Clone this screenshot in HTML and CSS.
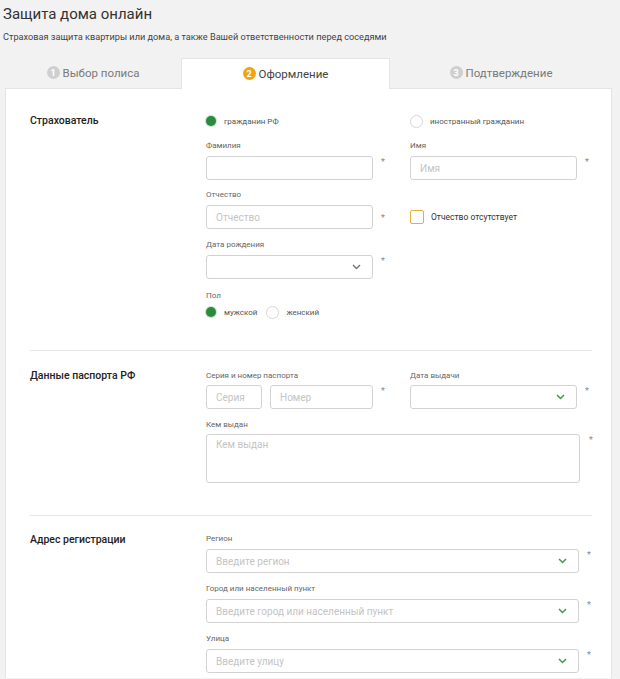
FILE: index.html
```html
<!DOCTYPE html>
<html lang="ru">
<head>
<meta charset="utf-8">
<title>Защита дома онлайн</title>
<link rel="stylesheet" href="styles.css">
</head>
<body>
<div class="head">
  <h1 class="title">Защита дома онлайн</h1>
  <p class="subtitle">Страховая защита квартиры или дома, а также Вашей ответственности перед соседями</p>
</div>
<div class="tabs">
  <div class="tab t1"><span class="num">1</span>Выбор полиса</div>
  <div class="tab t2 active"><span class="num">2</span>Оформление</div>
  <div class="tab t3"><span class="num">3</span>Подтверждение</div>
</div>
<div class="panel">
  <section class="section s1">
    <h2 class="sec-title">Страхователь</h2>
    <div class="fields">
      <div class="row">
        <div class="col"><label class="radio"><span class="dot on"></span>гражданин РФ</label></div>
        <div class="col"><label class="radio"><span class="dot big"></span>иностранный гражданин</label></div>
      </div>
      <div class="row r-fio">
        <div class="col">
          <div class="lbl">Фамилия</div>
          <div class="ctl"><div class="input w167"></div><span class="req">*</span></div>
        </div>
        <div class="col">
          <div class="lbl">Имя</div>
          <div class="ctl"><div class="input w167"><span class="ph">Имя</span></div><span class="req">*</span></div>
        </div>
      </div>
      <div class="row r-mid">
        <div class="col">
          <div class="lbl">Отчество</div>
          <div class="ctl"><div class="input w167"><span class="ph">Отчество</span></div><span class="req">*</span></div>
        </div>
        <div class="col">
          <div class="lbl">&nbsp;</div>
          <div class="ctl"><label class="check"><span class="box"></span>Отчество отсутствует</label></div>
        </div>
      </div>
      <div class="row r-birth">
        <div class="col">
          <div class="lbl">Дата рождения</div>
          <div class="ctl"><div class="input select w167"><svg class="chev" width="9" height="6" viewBox="0 0 9 6"><polyline points="1,1 4.5,4.5 8,1" fill="none" stroke="#777" stroke-width="1.4"/></svg></div><span class="req">*</span></div>
        </div>
      </div>
      <div class="row r-sex">
        <div class="col wide">
          <div class="lbl">Пол</div>
          <div class="radios">
            <label class="radio"><span class="dot on"></span>мужской</label>
            <label class="radio"><span class="dot big"></span>женский</label>
          </div>
        </div>
      </div>
    </div>
  </section>

  <section class="section s2">
    <h2 class="sec-title">Данные паспорта РФ</h2>
    <div class="fields">
      <div class="row">
        <div class="col">
          <div class="lbl">Серия и номер паспорта</div>
          <div class="ctl">
            <div class="input w56"><span class="ph">Серия</span></div>
            <div class="input w103 gapl"><span class="ph">Номер</span></div>
            <span class="req">*</span>
          </div>
        </div>
        <div class="col">
          <div class="lbl">Дата выдачи</div>
          <div class="ctl"><div class="input select w167"><svg class="chev" width="9" height="6" viewBox="0 0 9 6"><polyline points="1,1 4.5,4.5 8,1" fill="none" stroke="#3f9a4c" stroke-width="1.5"/></svg></div><span class="req">*</span></div>
        </div>
      </div>
      <div class="row r-who">
        <div class="col wide">
          <div class="lbl">Кем выдан</div>
          <div class="ctl"><div class="input textarea w374"><span class="ph">Кем выдан</span></div><span class="req">*</span></div>
        </div>
      </div>
    </div>
  </section>

  <section class="section s3">
    <h2 class="sec-title">Адрес регистрации</h2>
    <div class="fields">
      <div class="row">
        <div class="col wide">
          <div class="lbl">Регион</div>
          <div class="ctl"><div class="input select w373"><span class="ph">Введите регион</span><svg class="chev" width="9" height="6" viewBox="0 0 9 6"><polyline points="1,1 4.5,4.5 8,1" fill="none" stroke="#3f9a4c" stroke-width="1.5"/></svg></div><span class="req">*</span></div>
        </div>
      </div>
      <div class="row r-addr">
        <div class="col wide">
          <div class="lbl">Город или населенный пункт</div>
          <div class="ctl"><div class="input select w373"><span class="ph">Введите город или населенный пункт</span><svg class="chev" width="9" height="6" viewBox="0 0 9 6"><polyline points="1,1 4.5,4.5 8,1" fill="none" stroke="#3f9a4c" stroke-width="1.5"/></svg></div><span class="req">*</span></div>
        </div>
      </div>
      <div class="row r-addr">
        <div class="col wide">
          <div class="lbl">Улица</div>
          <div class="ctl"><div class="input select w373"><span class="ph">Введите улицу</span><svg class="chev" width="9" height="6" viewBox="0 0 9 6"><polyline points="1,1 4.5,4.5 8,1" fill="none" stroke="#3f9a4c" stroke-width="1.5"/></svg></div><span class="req">*</span></div>
        </div>
      </div>
    </div>
  </section>
</div>
</body>
</html>
```

FILE: styles.css
```css
html, body {
  margin: 0;
  padding: 0;
  background: #f2f2f2;
  font-family: Roboto, "Open Sans", "Liberation Sans", sans-serif;
  color: #333;
  overflow: hidden;
}

.head {
  padding: 4px 0 0 3px;
}

.title {
  margin: 0;
  font-size: 15px;
  line-height: 20px;
  font-weight: 400;
  color: #333;
}

.subtitle {
  margin: 7px 0 0;
  font-size: 9.2px;
  line-height: 12px;
  color: #444;
}

.tabs {
  display: flex;
  margin: 15px 0 0 5px;
  width: 607px;
  height: 30px;
}

.tab {
  display: flex;
  align-items: center;
  justify-content: center;
  height: 30px;
  padding-bottom: 1px;
  box-sizing: border-box;
  font-size: 11.5px;
  color: #7a7a7a;
}

.t1 { width: 176px; }
.t2 { width: 209px; }
.t3 { flex: 1; }

.tab.active {
  position: relative;
  z-index: 1;
  height: 31px;
  background: #fff;
  border: 1px solid #e4e4e4;
  border-bottom: none;
  color: #444;
}

.num {
  display: inline-flex;
  align-items: center;
  justify-content: center;
  width: 13px;
  height: 13px;
  border-radius: 50%;
  background: #cfcfcf;
  color: #fff;
  font-size: 9px;
  font-weight: 700;
  margin-right: 3px;
}

.active .num {
  background: #f0a415;
}

.panel {
  margin-left: 5px;
  width: 607px;
  box-sizing: border-box;
  background: #fff;
  border: 1px solid #e4e4e4;
  border-bottom: none;
  padding: 0 19px 0 24px;
}

.section {
  display: flex;
}

.s1 { padding: 26px 0 32px; }
.s2 { padding: 20px 0 32px; border-top: 1px solid #e6e6e6; }
.s3 { padding: 18px 0 5px; border-top: 1px solid #e6e6e6; }

.sec-title {
  width: 176px;
  flex: none;
  margin: 0;
  font-size: 10.5px;
  line-height: 12px;
  font-weight: 500;
  color: #222;
}

.s2 .sec-title { line-height: 10px; }

.fields {
  flex: 1;
  display: flex;
  flex-direction: column;
}

.row {
  display: flex;
}

.r-fio { margin-top: 14px; }
.r-mid { margin-top: 10px; }
.r-birth { margin-top: 11px; }
.r-sex { margin-top: 12px; }
.r-who { margin-top: 11px; }
.r-addr { margin-top: 11px; }

.col {
  width: 204px;
  flex: none;
  display: flex;
  flex-direction: column;
}

.col.wide {
  width: 386px;
}

.lbl {
  font-size: 8px;
  line-height: 10px;
  height: 10px;
  color: #666;
  margin-bottom: 5px;
}

.s2 .lbl { margin-bottom: 4px; }

.ctl {
  display: flex;
  align-items: flex-start;
}

.r-mid .ctl {
  align-items: center;
  height: 24px;
}

.input {
  height: 24px;
  box-sizing: border-box;
  border: 1px solid #d2d2d2;
  border-radius: 3px;
  background: #fff;
  display: flex;
  align-items: center;
  padding: 0 9px;
  flex: none;
}

.w167 { width: 167px; }
.w56 { width: 56px; }
.w103 { width: 103px; }
.w374 { width: 374px; }
.w373 { width: 373px; }

.gapl { margin-left: 8px; }

.textarea {
  height: 49px;
  align-items: flex-start;
  padding-top: 4px;
}

.select {
  justify-content: space-between;
}

.select .chev {
  margin-left: auto;
  margin-right: 2px;
}

.ph {
  font-size: 10px;
  color: #c4c4c4;
  white-space: nowrap;
}

.req {
  font-size: 9px;
  line-height: 10px;
  color: #8a8a8a;
  margin-left: 8px;
  margin-top: 1px;
}

.w374 + .req { margin-left: 9px; }

.radio {
  display: flex;
  align-items: center;
  height: 12px;
  font-size: 8px;
  color: #555;
}

.radios {
  display: flex;
  gap: 9px;
}

.dot {
  width: 12px;
  height: 12px;
  box-sizing: border-box;
  border-radius: 50%;
  border: 1px solid #d6d6d6;
  background: #fff;
  margin-right: 7px;
  flex: none;
}

.dot.big {
  width: 13px;
  height: 13px;
}

.dot.on {
  width: 10px;
  height: 10px;
  border: none;
  background: #2b8a3b;
  box-shadow: 0 0 0 1px #c9e0cc;
  margin-right: 8px;
}

.check {
  display: flex;
  align-items: center;
  font-size: 8.5px;
  color: #333;
}

.box {
  width: 14px;
  height: 14px;
  box-sizing: border-box;
  border: 1.5px solid #e2b03c;
  border-radius: 2px;
  margin-right: 7px;
}
```
